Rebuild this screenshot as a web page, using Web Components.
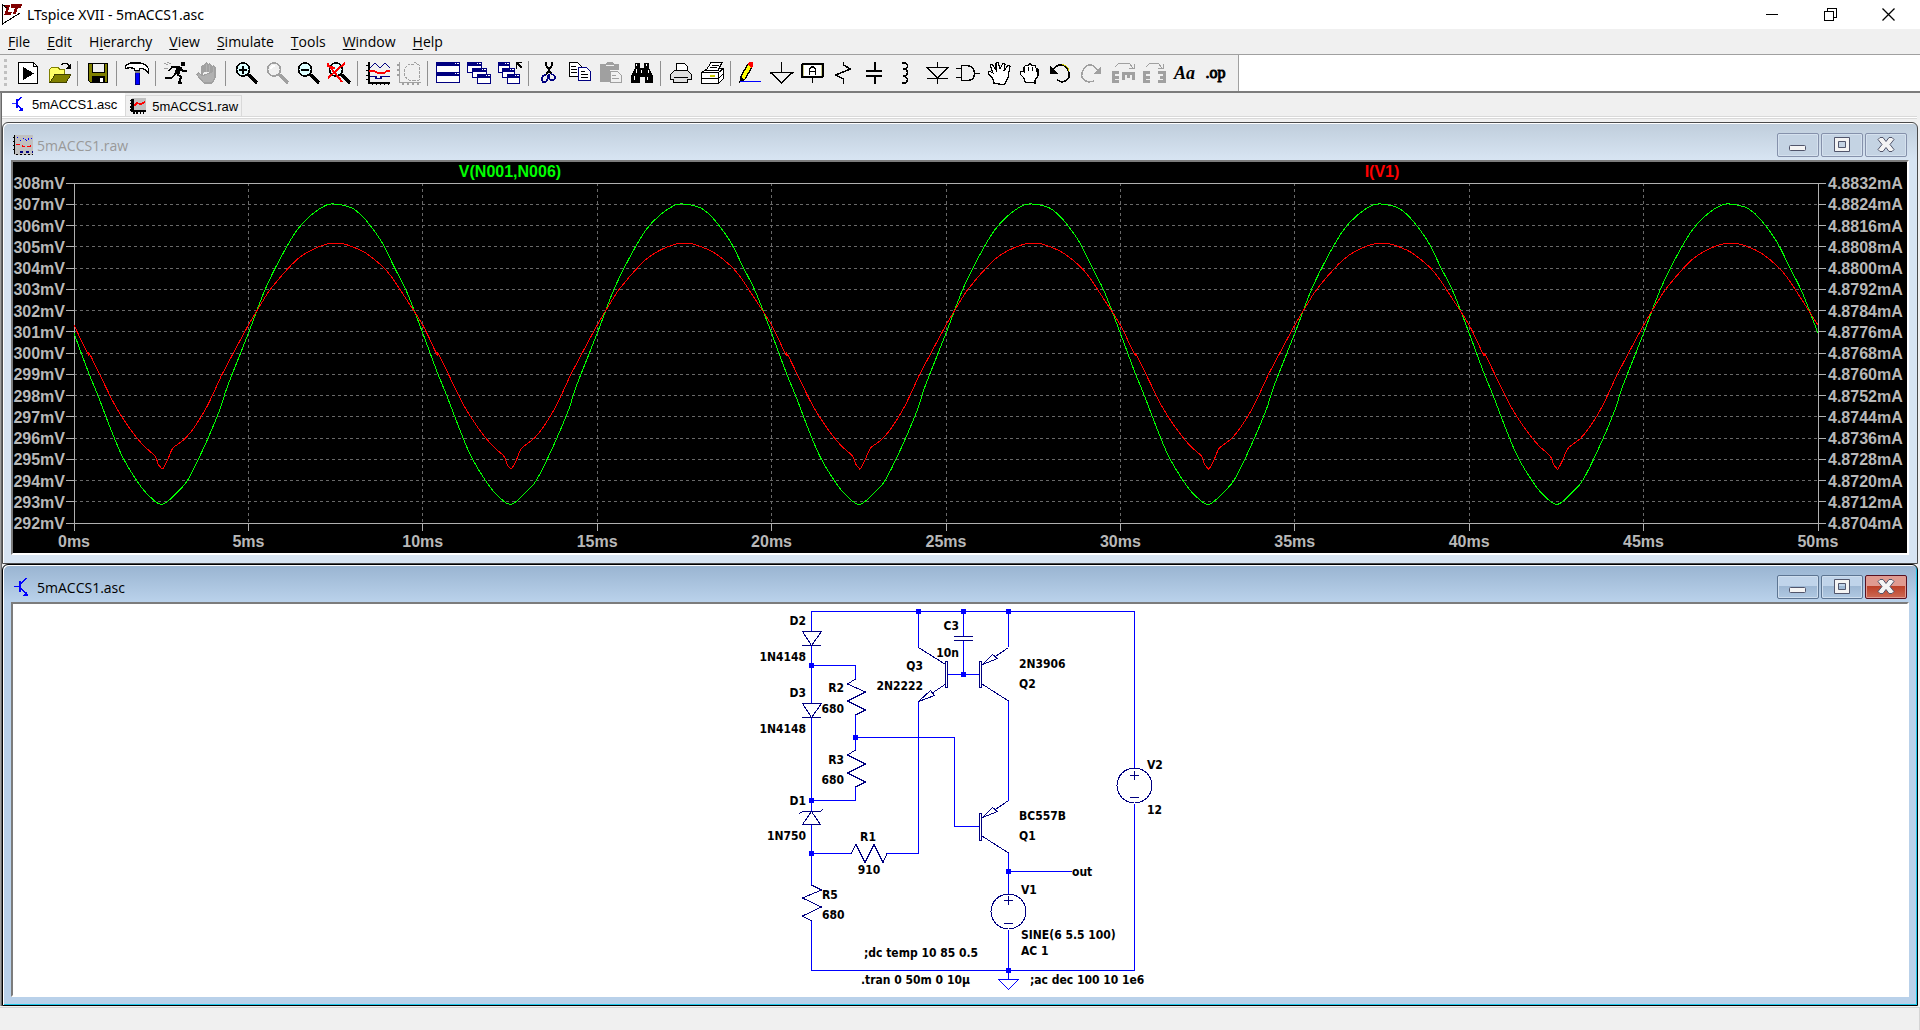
<!DOCTYPE html>
<html lang="en">
<head>
<meta charset="utf-8">
<title>LTspice XVII - 5mACCS1.asc</title>
<style>
  body {
    margin: 0;
    min-height: 100vh;
    display: flex;
    flex-direction: column;
    background: #f0f0f0;
    color: #000;
    font-family: 'Open Sans', 'Noto Sans', sans-serif;
    font-size: 14px;
  }
  .workspace {
    flex: 1;
    display: grid;
    grid-template-rows: 1fr 1fr;
    padding: 0 2px;
    background: linear-gradient(to right, #a0a0a0 1px, #696969 1px, #696969 2px, #f0f0f0 2px);
  }
</style>
</head>
<body>
  <title-bar>LTspice XVII - 5mACCS1.asc</title-bar>
  <menu-bar></menu-bar>
  <tool-bar></tool-bar>
  <tab-strip></tab-strip>
  <main class="workspace">
    <mdi-window icon="wave" caption="5mACCS1.raw"><wave-plot></wave-plot></mdi-window>
    <mdi-window icon="bjt" caption="5mACCS1.asc" active><schematic-view></schematic-view></mdi-window>
  </main>
  <status-bar></status-bar>

<script>
const attach = (el, content) => {
  const template = document.createElement('template')
  template.innerHTML = content
  el.attachShadow({ mode: 'open' })
  el.shadowRoot.append(template.content.cloneNode(true))
}

const smallIcons = {
  bjt: `<g fill="none" stroke="#00f"><path d="M1 9.5h6"/><path stroke-width="2" d="M7 4v11"/><path stroke-width="1.6" d="M8 7l5-6M8 11l6 7"/></g><path fill="#00f" d="M15 19h-6l5-5z"/>`,
  wave: `<path fill="#c0c0c0" d="M1 0h19v20H1z"/><path fill="none" stroke="#000" d="M1.500 0v19"/><path stroke="#000" stroke-dasharray="2 2" d="M0 2.500h1M0 6.500h1M0 10.500h1M0 14.500h1M3 19.500h17"/><path fill="none" stroke="#00f" stroke-dasharray="2 2" d="M4 2l4 4 3-3 3 3 3-4 3 3"/><path fill="none" stroke="#f00" stroke-width="1.500" stroke-dasharray="4 2" d="M3 9.500h4l3 2h7l3-2"/><path fill="none" stroke="#000080" stroke-width="2" stroke-dasharray="3 3" d="M7 17h13"/>`,
  tabwave: `<path fill="#c0c0c0" d="M2 0h18v17H2z"/><path fill="none" stroke="#000" stroke-width="3" d="M3 1v17"/><path stroke="#000" stroke-width="2" d="M2 16h18"/><path stroke="#000" stroke-width="3" stroke-dasharray="2 2" d="M4 18.500h16"/><path stroke="#000" stroke-width="2" stroke-dasharray="2 2" d="M1 2v14"/><path fill="none" stroke="#f00" stroke-width="2" d="M5 10l4-4 4 2 6-3"/>`
}

/* ---- application title bar ---- */
class TitleBar extends HTMLElement {
  constructor() {
    super()
    attach(this, `
      <style>
        :host { display: flex; align-items: center; height: 29px; padding-right: 3px; background: #fff; }
        .logo { margin-left: 2px; margin-right: 5px; }
        .name { flex: 1; font-family: 'Noto Sans', sans-serif; font-size: 14px; }
        button { width: 58px; height: 29px; border: 0; padding: 0; background: none; display: grid; place-items: center; }
        svg { fill: none; stroke: #000; shape-rendering: crispEdges; }
      </style>
      <svg class="logo" width="20" height="21">
        <path d="M.5 0v20L18 9M1 1l4 3"/>
        <path fill="#800000" stroke="none" d="M3 1h5L6 8h4l-1 3H2l3-8H3zM9 0h11l-1 4h-3l-2 6h-3l2-6H9z"/>
      </svg>
      <span class="name"><slot></slot></span>
      <button aria-label="Minimize"><svg width="13" height="13"><path d="M0 6.500h12"/></svg></button>
      <button aria-label="Restore"><svg width="13" height="13"><path d="M.5 3.500h9v9h-9zM3.500 3V.5h9v9H10"/></svg></button>
      <button aria-label="Close"><svg width="13" height="13" style="shape-rendering:auto"><path stroke-width="1.300" d="M.5.5l12 12M12.500.5l-12 12"/></svg></button>
    `)
  }
}

/* ---- menu ---- */
class MenuBar extends HTMLElement {
  constructor() {
    super()
    // & marks the access key
    const items = ['&File', '&Edit', 'H&ierarchy', '&View', '&Simulate', '&Tools', '&Window', '&Help']
    attach(this, `
      <style>
        :host { display: block; box-sizing: border-box; height: 26px; border-bottom: 1px solid #a0a0a0; background: #f0f0f0; }
        nav { display: flex; gap: 1px; height: 25px; }
        button { border: 0; padding: 0 8px; background: none; font: inherit; line-height: 24px; color: inherit; }
        u { text-underline-offset: 2px; }
      </style>
      <nav>${items.map(i => `<button>${i.replace(/&(.)/, '<u>$1</u>')}</button>`).join('')}</nav>
    `)
  }
}

/* ---- toolbar ---- */
const line = (d, extra = '') => `<path fill="none" stroke="#000" ${extra} d="${d}"/>`
const lens = (c, glass) => `<circle cx="9" cy="8.500" r="6.500" fill="${glass}" stroke="${c}" stroke-width="1.700"/><path stroke="${c}" stroke-width="3.500" d="M14 13.500l9 8.500"/>`
const hand = (d, fill, stroke) => `<path fill="${fill}" stroke="${stroke}" stroke-width="1.200" d="${d}"/>`
const win = (x, y, w, h) => `<path fill="#fff" stroke="#000080" d="M${x + .5} ${y + .5}h${w}v${h}h-${w}z"/><path stroke="#000080" stroke-width="3" d="M${x} ${y + 2}h${w + 1}"/><path stroke="#fff" d="M${x + w - 4} ${y + 1.5}h1m1 0h2"/>`

const tools = [
  ['Run', `<path fill="#fff" stroke="#000" d="M2.500 1.500h15l4 4v17h-19z"/>${line('M17.500 1.500v4h4')}<path d="M7 6l11 6.500L7 19z"/>`],
  ['Open', `<path fill="#ff6" stroke="#808000" d="M2.500 21V9l2-3h6l2 2h5v5"/><path fill="#808000" stroke="#404000" d="M3 21.500l5-8h16l-5 8z"/>${line('M14 4l3-2h3l3 4')}<path d="M24 2v6h-6z"/>`],
  '|',
  ['Save', `<path fill="#808000" stroke="#000" d="M2.500 2.500h19v19h-17l-2-2z"/><path fill="#f0f0f0" stroke="#000" d="M6.500 2.500h12v9h-12z"/><path d="M6 15h13v7H6z"/><path fill="#fff" d="M14 17h3v4h-3z"/>`],
  '|',
  ['Control panel', `<path fill="#fff" stroke="#000" stroke-width="1.300" d="M.5 4.500L5 2h10q7 1 8.500 6v4q-4-5-8.500-4.500l-1 2H10l-1-2-4-1-4 1z"/><path fill="#00f" stroke="#000080" d="M10.500 10h4v13h-4z"/><path stroke="#808080" stroke-width="2" d="M10 10.500h5"/>`],
  '|',
  ['Run simulation', `<circle cx="19" cy="3" r="2.500"/><path d="M13 5l5 1-3 8-5-1z"/>${line('M13 6H8l-3 4M17 8l2 2h4M12 13l-5 4H1', 'stroke-width="1.500"')}${line('M13 13l4 3-2 6h3', 'stroke-width="2"')}<path stroke="#a0a0a0" fill="none" d="M0 2l4 2M3 1l4 2M0 7l4 1"/>`],
  ['Halt', hand('M7 14V5q1-2 2 0v6M10 11V3q1.500-2 3 0v8M13 11V4q1-2 3 0v7M17 11V6q2-2 3 0v11l-3 5H9l-7-8q0-2 2-2l3 3z', '#b0b0b0', '#a0a0a0')],
  '|',
  ['Zoom area', lens('#000', '#dff') + line('M5 8.500h8M9 4.500v8', 'stroke-width="2"')],
  ['Pan', lens('#a0a0a0', '#f0f0f0') + '<path fill="none" stroke="#fff" stroke-width="2" d="M6 8q0-3 4-3"/>'],
  ['Zoom back', lens('#000', '#dff') + line('M5 8.500h8', 'stroke-width="2"')],
  ['Zoom to fit', lens('#000', '#dff') + '<path fill="none" stroke="#f00" stroke-width="2" d="M0 2l15 19M18 2L1 17M0 5l8 2"/>'],
  '|',
  ['Autorange', `${line('M2.500 1v20.500H24', 'stroke-width="2"')}${line('M0 4.500h2M0 9.500h2M0 14.500h2M0 18.500h2M6.500 22v2M10.500 22v2M14.500 22v2M18.500 22v2M22.500 22v2')}<path fill="none" stroke="#000080" stroke-width="1.300" d="M4 7l5-5 5 5 5-5 5 5M4 15.500h6v2h5v-2h9"/><path fill="none" stroke="#f00" stroke-width="1.600" d="M3 10h5l4 2h6l3-2h3"/>`],
  ['FFT', '<path fill="none" stroke="#a0a0a0" stroke-width="1.300" d="M2.500 1v20.500H24M0 4h2M0 9h2M0 14h2M6 22v2M11 22v2M16 22v2M21 22v2"/><path fill="none" stroke="#a0a0a0" stroke-dasharray="3 1" d="M17 3h-5l-5 5v7l5 4h5M17 1l5 3v15l-5 1"/>'],
  '|',
  ['Tile', win(0, 1, 23, 20) + win(0, 11, 23, 10)],
  ['Cascade', win(0, 1, 14, 10) + win(5, 7, 14, 9) + win(10, 13, 13, 9)],
  ['Close all', win(0, 1, 11, 10) + win(4, 7, 12, 9) + win(9, 13, 12, 9) + line('M18.500 8V1.500H24M19 2l5 5', 'stroke-width="1.500"')],
  '|',
  ['Cut', `${line('M9 1v3l6 10M15 1v3L9 14', 'stroke-width="1.800"')}<path fill="none" stroke="#000080" stroke-width="1.600" d="M9 14q-4 0-4 4t3 3 3-7M14 13q5 1 4 4t-4 2-2-6"/>`],
  ['Copy', `<path fill="#fff" stroke="#000" d="M1.500 1.500h8l4 4v10h-12z"/><path fill="#fff" stroke="#000080" d="M10.500 6.500h8l4 4v9h-12z"/>${line('M3 5.500h5M3 8.500h6M3 11.500h6M13 10.500h4M13 13.500h7M13 16.500h7')}`],
  ['Paste', '<path fill="#a0a0a0" d="M1 3h5l2-2h5l2 2h5v6h-9v12H1z"/><path fill="#f0f0f0" stroke="#a0a0a0" d="M11.500 10.500h7l4 4v7h-11z"/><path fill="none" stroke="#f0f0f0" d="M7 4.500h8"/><path fill="none" stroke="#a0a0a0" d="M13 14.500h4M13 17.500h7"/>'],
  ['Find', '<path d="M5 2h5v5h4V2h5v5l4 8v7h-8v-6h-5v6H1v-7l4-8z"/><path stroke="#fff" d="M6.500 3v2M16.500 3v2M6 8v4M4 15v4M11.500 9v3M18 9v3M17 16v3"/>'],
  '|',
  ['Print', `<path fill="#fff" stroke="#000" d="M7.500 9.500v-7h8l3 3v4"/><path fill="#e0e0e0" stroke="#000" d="M1.500 13.500l4-4h13l4 4v5h-4v3h-14v-3h-3z"/>${line('M5 16.500h14')}`],
  ['Print setup', `<path fill="#fff" stroke="#000" d="M1.500 11.500l6-4h16v10l-5 5h-17z"/><path fill="#fff" stroke="#000" d="M6 9.500l5-8h11l-4 8z"/>${line('M10 6.500h7M12 4.500h7M1.500 11.500h17v10M1.500 17.500h17l5-5M18.500 11.500l5-4')}<path stroke="#cc0" stroke-width="1.500" d="M10 15h5"/>`],
  '|',
  ['Wire', '<path fill="#ff0" stroke="#000" stroke-width="1.300" d="M9 3l4 3-7 12-5 3 1-6z"/><path fill="#f00" d="M9 3l1-2h4v4l-2 2z"/><path d="M1 15l4 3-4 3z"/><path stroke="#00f" d="M1 20.500h21"/>'],
  ['Ground', line('M11.500 1v10.500M.5 11.500h22l-11 10.500z', 'stroke-width="1.500"')],
  ['Label net', `<rect x="1" y="3" width="21" height="13" rx="1" fill="#fff" stroke="#000" stroke-width="2"/><path fill="none" stroke="#cc8" d="M2.500 4v11M20.500 4v11"/>${line('M11.500 16v6')}${line('M8.500 13.500V8l2-2h2l2 2v5.500M8.500 10.500h6', 'stroke-width="1.500"')}`],
  ['Resistor', line('M11.500 1v3l7 4-15 6 8 4v5', 'stroke-width="1.500"')],
  ['Capacitor', line('M11.500 1v8M3 9.500h16M3 14.500h16M11.500 15v8', 'stroke-width="2"')],
  ['Inductor', line('M8 2h3q5 3 0 6H9M11 8q5 3.500 0 7H9M11 15q5 4 0 7H8', 'stroke-width="1.500"')],
  ['Diode', line('M12.500 1v5M2 6.500h21L12.500 17zM2 17.500h21M12.500 17v6', 'stroke-width="1.500"')],
  ['Component', line('M0 7.500h5M0 16.500h5M18 12.500h6', 'stroke-width="1.500"') + '<path fill="#f0f0f0" stroke="#000" stroke-width="1.500" d="M5.500 4.500h6q7 1 7 8t-7 7h-6z"/>'],
  ['Move', hand('M7 22l-1-4-5-6 1-2 4 2-3-8 2-1 4 6V2l2-1 2 7 3-6 2 1-1 7 4-6 2 1-2 12-4 7z', '#fff', '#000')],
  ['Drag', hand('M7 21l-1-4-4-4 1-3 3 1V6l2-2 2 1 1-2h2l1 2 3-1 1 3 2 1v7l-3 4v3z', '#fff', '#000') + line('M6 9v3M10 6v4M14 6v4M18 8v3')],
  ['Undo', line('M3 10q5-7 10-6t7 8-7 9l-5-2', 'stroke-width="1.500"') + '<path d="M1 5v8h8z"/><path fill="none" stroke="#cc0" d="M13 3.500q6 1 7 6"/>'],
  ['Redo', '<path fill="none" stroke="#a0a0a0" stroke-width="1.500" d="M18 10q-4-7-9-6t-7 8 7 9l5-1"/><path fill="#a0a0a0" d="M21 5v8h-8z"/>'],
  ['Mirror', '<path fill="none" stroke="#a0a0a0" stroke-width="3" d="M8 11.500H2.500v9H8M3 16h5M11 12.500h13M12.500 12v7M17.500 12v5M22.500 12v7"/><path fill="none" stroke="#a0a0a0" d="M4 6l4-4h10l4 5M23 3v4h-5"/>'],
  ['Rotate', '<path fill="none" stroke="#a0a0a0" stroke-width="3" d="M8 11.500H2.500v9H8M3 16h5M16 11.500h6.500v9H16M18 16h5"/><path fill="none" stroke="#a0a0a0" d="M4 6l4-4h8l4 5M21 3v4h-5"/>'],
  ['Text', 'Aa'],
  ['SPICE directive', '.op']
]

class ToolBar extends HTMLElement {
  constructor() {
    super()
    const parts = tools.map(t => {
      if (t === '|') return '<i></i>'
      const [name, art] = t
      const inner = art[0] === '<' ? `<svg width="24" height="24">${art}</svg>` : `<span class="${art === 'Aa' ? 'text' : 'op'}">${art}</span>`
      return `<button aria-label="${name}">${inner}</button>`
    })
    attach(this, `
      <style>
        :host { display: block; box-sizing: border-box; height: 38px; border-bottom: 2px solid #7c7c7c; background: #fff; }
        .band { display: flex; align-items: center; width: max-content; height: 36px; padding-left: 4px; padding-right: 7px; border-right: 1px solid #a0a0a0; background: #f0f0f0; }
        .grip { width: 3px; height: 28px; margin-right: 5px; background: repeating-linear-gradient(#c0c0c0 0 3px, #f0f0f0 3px 6px); }
        button { width: 31px; height: 32px; padding: 0; border: 0; background: none; display: grid; place-items: center; }
        i { width: 1px; height: 25px; margin: 0 4px 0 3px; background: #909090; }
        svg { shape-rendering: crispEdges; }
        span { line-height: 24px; font-family: 'Liberation Serif', serif; font-weight: 700; }
        .text { font-size: 18px; font-style: italic; }
        .op { font-size: 16px; font-weight: 400; -webkit-text-stroke: 1px #000; }
      </style>
      <div class="band" role="toolbar"><div class="grip"></div>${parts.join('')}</div>
    `)
  }
}

/* ---- document tabs ---- */
class TabStrip extends HTMLElement {
  constructor() {
    super()
    attach(this, `
      <style>
        :host { display: block; height: 29px; padding: 0 3px 0 2px; box-sizing: border-box; background: linear-gradient(to right, #a0a0a0 1px, #696969 1px, #696969 2px, #f0f0f0 2px); }
        .tabs { display: flex; align-items: flex-end; height: 23px; border-bottom: 1px solid #d9d9d9; box-shadow: 0 1px #fff, 0 2px #d9d9d9; }
        button { display: flex; align-items: center; gap: 6px; height: 21px; border: 1px solid #d9d9d9; border-bottom: 0; padding: 0 3px 0 4px; background: #f0f0f0; font: 13px 'Liberation Sans', sans-serif; color: #000; }
        button.on { height: 23px; padding: 0 7px 2px 8px; gap: 8px; background: #fff; border-color: #fff; }
        svg { shape-rendering: crispEdges; }
      </style>
      <div class="tabs" role="tablist">
        <button class="on" role="tab"><svg width="13" height="16" viewBox="0 0 16 20">${smallIcons.bjt}</svg>5mACCS1.asc</button>
        <button role="tab"><svg width="16" height="16" viewBox="0 0 20 20">${smallIcons.tabwave}</svg>5mACCS1.raw</button>
      </div>
    `)
  }
}

/* ---- child window frame ---- */
class MdiWindow extends HTMLElement {
  connectedCallback() {
    if (this.shadowRoot) return
    attach(this, `
      <style>
        :host {
          display: flex; flex-direction: column; box-sizing: border-box; min-width: 0;
          border: 1px solid #4a4a4a; border-radius: 6px 6px 0 0; padding: 0 8px;
          padding-bottom: 8px;
          background: linear-gradient(#bfcddb, #d7e4f2 36px); box-shadow: inset 1px 1px #fff;
          color: #999;
        }
        :host([active]) {
          border-color: #000; color: #000;
          background: linear-gradient(#99b4d1, #b9d1ea 36px);
          box-shadow: inset 1px 1px #fff, inset -1px -1px #1cc6e8;
        }
        header { display: flex; align-items: center; height: 37px; }
        .icon { margin: 7px 4px 0 2px; shape-rendering: crispEdges; }
        .caption { flex: 1; margin-top: 8px; line-height: 20px; font-size: 14px; }
        .buttons { display: flex; gap: 2px; margin: 7px 2px 0 0; }
        button {
          display: grid; place-items: center; box-sizing: border-box; width: 42px; height: 24px; padding: 0;
          border: 1px solid #8591ab; border-radius: 2px; box-shadow: inset 0 0 0 1px #d5e1ee; background: #c4d3e3;
        }
        :host([active]) button { border-color: #5d7592; box-shadow: inset 0 0 0 1px #cfdeee; background: linear-gradient(#c0d4ea 45%, #9db7d3 45%, #b0c9e2); }
        :host([active]) .close { border-color: #581020; box-shadow: inset 0 0 0 1px #e09b92; background: linear-gradient(#e09a90 45%, #bc3e26 45%, #cd6a55); }
        button svg { fill: #f4f4f4; stroke: #51556b; }
        .client { flex: 1; display: grid; min-height: 0; border: 2px solid; border-color: #7c7c7c #fff #fff #7c7c7c; background: #fff; }
      </style>
      <header>
        <svg class="icon" width="20" height="20">${smallIcons[this.getAttribute('icon')]}</svg>
        <span class="caption">${this.getAttribute('caption')}</span>
        <div class="buttons">
          <button aria-label="Minimize"><svg width="18" height="18"><rect x=".5" y="9.500" width="16" height="5" rx="1"/></svg></button>
          <button aria-label="Maximize"><svg width="18" height="16"><path fill-rule="evenodd" d="M1.500.5h15v14h-15zM5.500 4.500v6h7v-6z"/></svg></button>
          <button aria-label="Close" class="close"><svg width="18" height="16"><path d="M1 2.500l2-2h3l3 4 3-4h3l2 2-4 5 4 5-2 2h-3l-3-4-3 4h-3l-2-2 4-5z"/></svg></button>
        </div>
      </header>
      <div class="client"><slot></slot></div>
    `)
  }
}

/* ---- waveform viewer ---- */
// one 10ms period of each trace: [ms, fraction of the plot height from the top]
const vTrace = [
  [0, .442], [.4, .553], [.69, .626], [1.07, .728], [1.4, .807], [1.85, .883], [2.17, .922], [2.54, .945],
  [3, .905], [3.27, .872], [3.7, .783], [4.17, .67], [4.4, .598], [5, .442], [5.48, .313], [5.94, .217],
  [6.39, .139], [6.8, .094], [7.23, .065], [7.5, .062], [7.78, .067], [8.03, .077], [8.35, .107], [8.82, .173], [9.2, .251], [9.54, .32], [10, .442]
]
const iTrace = [
  [0, .418], [.4, .503], [.48, .509], [1.17, .653], [1.62, .725], [1.98, .771], [2.32, .803], [2.41, .826], [2.49, .837], [2.55, .84],
  [2.68, .815], [2.82, .782], [2.98, .768], [3.2, .75], [3.46, .717], [3.81, .658], [4.19, .575], [4.26, .56], [5, .418], [5.42, .346],
  [5.65, .31], [6.23, .241], [6.56, .212], [6.94, .191], [7.33, .178], [7.68, .178], [7.97, .187], [8.35, .205], [8.82, .243], [9.11, .277], [9.54, .344], [10, .418]
]

class WavePlot extends HTMLElement {
  constructor() {
    super()
    const left = [], right = [], bottom = []
    for (let i = 0; i <= 16; i++) {
      left.push(`<span>${308 - i}mV</span>`)
      right.push(`<span>${(4.8832 - i * .0008).toFixed(4)}mA</span>`)
    }
    for (let t = 0; t <= 50; t += 5) bottom.push(`<span>${t}ms</span>`)
    attach(this, `
      <style>
        :host {
          display: grid; grid-template-columns: 61px 1fr 89px; min-width: 0; background: #000;
          font: 700 16px/20px 'Liberation Sans', sans-serif; color: #b8b8b8;
        }
        .axis { display: flex; flex-direction: column; justify-content: space-between; padding: 12px 9px 19px 0; text-align: right; }
        .axis.right { padding: 12px 0 19px 10px; text-align: left; }
        .middle { display: grid; grid-template-rows: 21px 1fr 30px; min-width: 0; }
        .legend { display: grid; grid-template-columns: 1fr 1fr; text-align: center; }
        .v { color: #0f0; }
        .i { color: #f00; }
        svg { display: block; width: 100%; height: 100%; min-height: 0; overflow: visible; shape-rendering: crispEdges; fill: none; }
        .times { display: flex; justify-content: space-between; margin: 0 -30px; padding-top: 9px; }
        .times span { width: 60px; text-align: center; }
      </style>
      <div class="axis">${left.join('')}</div>
      <div class="middle">
        <div class="legend"><span class="v">V(N001,N006)</span><span class="i">I(V1)</span></div>
        <svg></svg>
        <div class="times">${bottom.join('')}</div>
      </div>
      <div class="axis right">${right.join('')}</div>
    `)
  }

  connectedCallback() {
    this.svg = this.shadowRoot.querySelector('svg')
    this.observer = new ResizeObserver(() => this.render())
    this.observer.observe(this.svg)
    this.render()
  }

  disconnectedCallback() {
    this.observer.disconnect()
  }

  // Catmull-Rom spline through five repeats of the period
  curve(points, w, h) {
    const all = []
    for (let n = 0; n < 5; n++) {
      points.slice(n ? 1 : 0).forEach(([t, y]) => all.push([(n * 10 + t) * w / 50, y * h]))
    }
    let d = `M${all[0]}`
    for (let k = 0; k < all.length - 1; k++) {
      const a = all[k - 1] || all[k], b = all[k], c = all[k + 1], e = all[k + 2] || c
      d += `C${b[0] + (c[0] - a[0]) / 6} ${b[1] + (c[1] - a[1]) / 6} ${c[0] - (e[0] - b[0]) / 6} ${c[1] - (e[1] - b[1]) / 6} ${c}`
    }
    return d
  }

  render() {
    const { width: w, height: h } = this.svg.getBoundingClientRect()
    let grid = '', ticks = ''
    for (let i = 0; i <= 16; i++) {
      const y = Math.floor(i * h / 16) + .5
      if (i % 16) grid += `M0 ${y}H${w}`
      ticks += `M-8 ${y}H0M${w} ${y}h8`
    }
    for (let i = 0; i <= 10; i++) {
      const x = Math.floor(i * w / 10) + .5
      if (i % 10) grid += `M${x} 0V${h}`
      ticks += `M${x} ${h}v8`
    }
    this.svg.innerHTML = `
      <path stroke="#696969" stroke-dasharray="3 3" d="${grid}"/>
      <path stroke="#b0b0b0" d="M.5 .5H${w + .5}V${h + .5}H.5z${ticks}"/>
      <path stroke="#0f0" d="${this.curve(vTrace, w, h)}"/>
      <path stroke="#f00" d="${this.curve(iTrace, w, h)}"/>
    `
  }
}

/* ---- schematic editor ---- */
const nodes = [[918, 611], [963, 611], [1008, 611], [811, 665], [855, 737], [811, 800], [811, 853], [963, 674], [1008, 871], [1008, 970]]
const labels = [
  ['end', 806, 625, 'D2'], ['end', 806, 661, '1N4148'], ['end', 806, 697, 'D3'], ['end', 806, 733, '1N4148'],
  ['end', 806, 805, 'D1'], ['end', 806, 840, '1N750'], ['end', 844, 692, 'R2'], ['end', 844, 713, '680'],
  ['end', 844, 764, 'R3'], ['end', 844, 784, '680'], ['end', 959, 630, 'C3'], ['end', 959, 657, '10n'],
  ['end', 923, 670, 'Q3'], ['end', 923, 690, '2N2222'], ['start', 1019, 668, '2N3906'], ['start', 1019, 688, 'Q2'],
  ['start', 1019, 820, 'BC557B'], ['start', 1019, 840, 'Q1'], ['middle', 868, 841, 'R1'], ['middle', 869, 874, '910'],
  ['start', 822, 899, 'R5'], ['start', 822, 919, '680'], ['start', 1021, 894, 'V1'], ['start', 1021, 939, 'SINE(6 5.5 100)'],
  ['start', 1021, 955, 'AC 1'], ['start', 1072, 876, 'out'], ['start', 1147, 769, 'V2'], ['start', 1147, 814, '12'],
  ['start', 864, 957, ';dc temp 10 85 0.5'], ['start', 861, 984, '.tran 0 50m 0 10µ'], ['start', 1030, 984, ';ac dec 100 10 1e6']
]

class SchematicView extends HTMLElement {
  constructor() {
    super()
    attach(this, `
      <style>
        :host { display: flex; justify-content: center; background: #fff; }
        svg { display: block; shape-rendering: crispEdges; fill: none; stroke: #00f; }
        .part { stroke: #000080; }
        .node { fill: #00f; stroke: none; }
        text { fill: #000; stroke: none; font: 700 12px 'DejaVu Sans Condensed', 'Noto Sans', sans-serif; }
      </style>
      <svg width="420" height="391" viewBox="750 604 420 391">
        <path d="M811.500 631V611.500H1134.500V768M811.500 645V703M811.500 717V811M811.500 665.500H855.500V679M855.500 715V750M855.500 787V800.500H811.500M855.500 737.500H954.500V826.500H979
          M918.500 611V647M918.500 701V853.500H887M963.500 611V636M963.500 641V674M948 674.500H980M1008.500 611V647M1008.500 701V801M1008.500 853V894M1008.500 871.500H1072M1008.500 930V979
          M811.500 824V885M811.500 853.500H851M811.500 921V970.500H1134.500V804M998.500 979.500h20l-10 10z"/>
        <g class="part">
          <path d="M802.500 631.500h19l-10 14zM802 645.500h19M802.500 703.500h19l-10 14zM802 717.500h19M799 813.500l4-2h17l3-2M811.500 811.500l9 13h-18z"/>
          <path d="M855.500 679l-8 5 18 8-18 9 18 9-10 5M855.500 750l-8 5 18 9-18 9 18 9-10 5M811.500 885l10 5-19 8 19 9-19 9 9 5M851 853.500l5-9 9 18 9-18 9 18 4-9"/>
          <path d="M954 636.500h19M954 640.500h19M918.500 647.500l27 17M945.500 661.500h2v26h-2zM979.500 661.500h2v26h-2zM982 684l26.500 17M979.500 813.500h2v27h-2zM982 836l26.500 17"/>
          <path d="M945 684.500l-12 8M918.500 701.500l12-11 4 5zM1008.500 647.500l-13 9M982.500 664.500l10-10 5 4zM1008.500 800.500l-13 9M982.500 817.500l10-10 5 4z"/>
          <circle cx="1008.500" cy="911.500" r="17.500"/><circle cx="1134.500" cy="785.500" r="17.500"/>
          <path d="M1004 900.500h9M1008.500 896v9M1004 923.500h9M1130 775.500h9M1134.500 771v9M1130 797.500h9"/>
        </g>
        <g class="node">${nodes.map(([x, y]) => `<rect x="${x - 2}" y="${y - 2}" width="5" height="5"/>`).join('')}</g>
        ${labels.map(([anchor, x, y, s]) => `<text x="${x}" y="${y}" text-anchor="${anchor}">${s}</text>`).join('')}
      </svg>
    `)
  }
}

class StatusBar extends HTMLElement {
  constructor() {
    super()
    attach(this, `
      <style>
        :host { display: block; height: 24px; box-sizing: border-box; padding-top: 1px; background: #f0f0f0; }
        div { height: 22px; border-top: 1px solid #d5d5d5; border-right: 1px solid #d5d5d5; }
      </style>
      <div></div>
    `)
  }
}

window.customElements.define('title-bar', TitleBar)
window.customElements.define('menu-bar', MenuBar)
window.customElements.define('tool-bar', ToolBar)
window.customElements.define('tab-strip', TabStrip)
window.customElements.define('mdi-window', MdiWindow)
window.customElements.define('wave-plot', WavePlot)
window.customElements.define('schematic-view', SchematicView)
window.customElements.define('status-bar', StatusBar)
</script>
</body>
</html>
